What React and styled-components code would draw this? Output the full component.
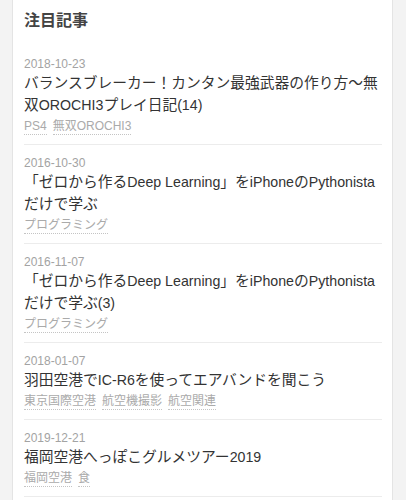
import React from "react"
import styled, { createGlobalStyle } from "styled-components"

const GlobalStyle = createGlobalStyle`
    html, body {
        margin: 0;
        padding: 0;
        background: #f3f3f3;
    }

    body {
        font-family: "Liberation Sans", "Noto Sans CJK JP", sans-serif;
        color: #333;
        -webkit-font-smoothing: antialiased;
    }
`

const Page = styled.div`
    padding: 0 13px 0 12px;
    min-height: 500px;
`

const Card = styled.section`
    background: #fff;
    border-left: 1px solid #e4e4e4;
    border-right: 1px solid #e4e4e4;
    padding: 9px 9px 0 11px;
    min-height: 491px;
`

const Heading = styled.h2`
    margin: 0 0 13px;
    font-size: 16px;
    line-height: 24px;
    font-weight: 700;
    color: #444;
`

const List = styled.ul`
    list-style: none;
    margin: 0;
    padding: 0;
`

const Item = styled.li`
    padding: 10px 0 7px;
    border-bottom: 1px solid #ececec;
    margin-right: 1px;
`

const Date = styled.div`
    font-size: 12px;
    line-height: 16px;
    color: #a3a3a3;
`

const Title = styled.a`
    display: block;
    font-size: 14.75px;
    line-height: 22px;
    color: #333;
    text-decoration: none;
    margin-right: -1px;
`

// Latin runs sit a touch smaller than the japanese text
const Latin = styled.span`
    font-size: 14.2px;
`

const Tags = styled.div`
    display: flex;
    gap: 6px;
    margin-top: 2px;
    height: 19px;
`

const Tag = styled.span`
    font-size: 12px;
    line-height: 16px;
    height: 16px;
    color: #aaa;
    border-bottom: 1px dotted #c4c4c4;
`

const articles = [
    {
        date: "2018-10-23",
        title: "バランスブレーカー！カンタン最強武器の作り方〜無双OROCHI3プレイ日記(14)",
        tags: ["PS4", "無双OROCHI3"],
    },
    {
        date: "2016-10-30",
        title: "「ゼロから作るDeep Learning」をiPhoneのPythonistaだけで学ぶ",
        tags: ["プログラミング"],
    },
    {
        date: "2016-11-07",
        title: "「ゼロから作るDeep Learning」をiPhoneのPythonistaだけで学ぶ(3)",
        tags: ["プログラミング"],
    },
    {
        date: "2018-01-07",
        title: "羽田空港でIC-R6を使ってエアバンドを聞こう",
        tags: ["東京国際空港", "航空機撮影", "航空関連"],
    },
    {
        date: "2019-12-21",
        title: "福岡空港へっぽこグルメツアー2019",
        tags: ["福岡空港", "食"],
    },
]

const latinRun = /^[\x20-\x7e]+$/

// Split a title into latin and japanese runs
function splitRuns(text) {
    return text.split(/([\x20-\x7e]+)/).filter(Boolean)
}

function App() {
    return (
        <>
            <GlobalStyle />
            <Page>
                <Card>
                    <Heading>注目記事</Heading>

                    <List>
                        {articles.map(article => (
                            <Item key={article.date}>
                                <Date>{article.date}</Date>
                                <Title href="#">
                                    {splitRuns(article.title).map((run, i) =>
                                        latinRun.test(run) ? (
                                            <Latin key={i}>{run}</Latin>
                                        ) : (
                                            run
                                        )
                                    )}
                                </Title>
                                <Tags>
                                    {article.tags.map(tag => (
                                        <Tag key={tag}>{tag}</Tag>
                                    ))}
                                </Tags>
                            </Item>
                        ))}
                    </List>
                </Card>
            </Page>
        </>
    )
}

export default App
